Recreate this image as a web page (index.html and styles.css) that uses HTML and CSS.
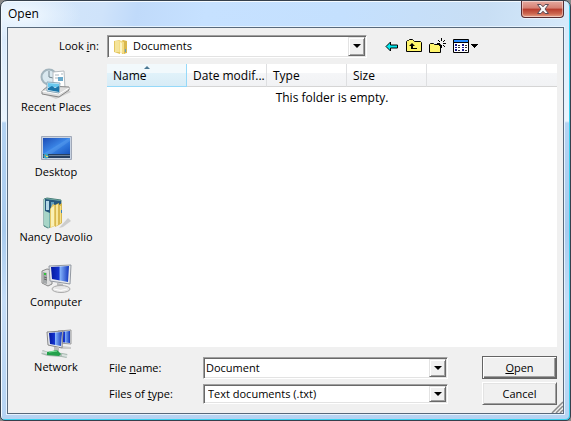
FILE: index.html
```html
<!DOCTYPE html>
<html lang="en">
<head>
<meta charset="utf-8">
<title>Open</title>
<link rel="stylesheet" href="styles.css">
</head>
<body>
<div class="window">
  <header class="titlebar">
    <h1 class="title">Open</h1>
    <button class="close" aria-label="Close">
      <svg width="14" height="12" viewBox="0 0 14 12"><path d="M1.5 1.5h3.4L7 3.8l2.1-2.3h3.4L9 6l3.5 4.5H9.1L7 8.2l-2.1 2.3H1.5L5 6z" fill="#f7f7f7" stroke="#5a4b56" stroke-width="1"/></svg>
    </button>
  </header>
  <form class="client">
    <label class="look-label" for="look">Look <u>i</u>n:</label>
    <div class="toolbar">
      <div class="combo look">
        <svg class="folder" width="16" height="18" viewBox="0 0 16 18">
          <path d="M1 3l6-1v14l-6-2z" fill="#e3c65f"/><path d="M2 3h5v11H2z" fill="#f5e49a"/>
          <path d="M7 4l3-2 4 1v12l-5 1z" fill="#dcb84c"/><path d="M6 2l5 2v12l-5-2z" fill="#f3dd86"/><path d="M7 4l2 1v10l-2-1z" fill="#fcf3c4"/><path d="M11 5l3-2v11l-3 2z" fill="#d9b84e"/><path d="M12 11h1v3h-1z" fill="#599fd0"/>
        </svg>
        <select id="look"><option>Documents</option></select>
        <span class="drop"></span>
      </div>
      <button type="button" class="tool" aria-label="Back">
        <svg width="14" height="11" viewBox="0 0 14 11"><path d="M1 5.5L5.5 1v3h7v3h-7v3z" fill="#00eaf0" stroke="#000"/></svg>
      </button>
      <button type="button" class="tool" aria-label="Up one level">
        <svg width="16" height="14" viewBox="0 0 16 14"><path d="M.5 12.500V2.500l1-1h1l1-1h3l1 1 1 1h6l1 1v9z" fill="#fff56c" stroke="#000"/><path d="M6 4L3 7h2v3h6V9H7V7h2z" fill="#000"/></svg>
      </button>
      <button type="button" class="tool" aria-label="New folder">
        <svg width="17" height="16" viewBox="0 0 17 16"><path d="M.5 14.500V6.500l1-1h3l1 1h6v8z" fill="#fff56c" stroke="#000"/><path d="M12 0h1v3h-1zM12 7h1v3h-1zM8 5h3v1H8zM14 5h3v1h-3zM9 2h1v1H9zM10 3h1v1h-1zM15 2h1v1h-1zM14 3h1v1h-1zM14 7h1v1h-1zM15 8h1v1h-1zM10 7h1v1h-1z" fill="#000"/></svg>
      </button>
      <button type="button" class="tool" aria-label="View menu">
        <svg width="25" height="14" viewBox="0 0 25 14"><path d="M.5.500h15v13H.5z" fill="#fff" stroke="#000"/><path d="M1 1h14v2H1z" fill="#258bff"/><path d="M0 3h16v1H0z" fill="#000"/><path d="M2 5h2v2H2zM2 8h2v1H2zM2 10h2v2H2zM9 5h2v2H9zM9 8h2v1H9zM9 10h2v2H9z" fill="#16168c"/><path d="M5 6h2v1H5zM5 8h2v1H5zM5 11h2v1H5zM12 6h2v1h-2zM12 8h2v1h-2zM12 11h2v1h-2z" fill="#333"/><path d="M18 5h7v1h-1v1h-1v1h-1v1h-1V8h-1V7h-1V6h-1z" fill="#000"/></svg>
      </button>
    </div>

    <nav class="places">
      <a href="#recent">
        <svg width="32" height="32" viewBox="0 0 32 32">
          <path d="M6 28l10 4 15-7-3-2z" fill="#bbb" opacity=".6"/>
          <circle cx="9" cy="10" r="7.500" fill="#d9e8ef" stroke="#a2b4bd" stroke-width="2"/><path d="M9 4v6l4 1" fill="none" stroke="#71838d"/>
          <path d="M13 5l11-1 1 17-12 1z" fill="#fff" stroke="#b5bbc0"/><path d="M15 8h4M15 11h3M21 7h2" stroke="#a7b4be"/><path d="M18 10h5v4h-5z" fill="#69a9cb"/>
          <path d="M2 24l6-5 21 1v3l-10 7-17-3z" fill="#dedede" stroke="#858585"/><path d="M2 24l17 3 10-6" fill="none" stroke="#fff"/>
          <path d="M7 15l13 1-1 10-12-2z" fill="#dff5ff" stroke="#8ba9ba"/><path d="M8 16l11 1v3H8z" fill="#69c8ee"/><path d="M8 21l4-2 3 2 4-2v6L8 23z" fill="#1c76aa"/>
        </svg>
        <span>Recent Places</span></a>
      <a href="#desktop">
        <svg width="32" height="32" viewBox="0 0 32 32">
          <defs><linearGradient id="desk" x2="1" y2="1"><stop stop-color="#1c4cb5"/><stop offset=".5" stop-color="#3b87e8"/><stop offset="1" stop-color="#1552be"/></linearGradient></defs>
          <path d="M1.500 4.500h30v23h-30z" fill="#c8d3e3" stroke="#a1a9b8"/><path d="M3 6h27v17H3z" fill="url(#desk)"/><path d="M3 22L29 6h1v3L10 23z" fill="#77b4f4" opacity=".25"/><path d="M3 22h27v4H3z" fill="#263f61"/><path d="M9 23h21v1H9z" fill="#6c829c"/><circle cx="6" cy="24" r="2.500" fill="#3ca7c1"/><path d="M5 23h1v1H5z" fill="#f17343"/><path d="M6 24h2v1H6z" fill="#f3df58"/>
        </svg>
        <span>Desktop</span></a>
      <a href="#user">
        <svg width="32" height="32" viewBox="0 0 32 32">
          <path d="M19 31l9-10 3 3-8 6z" fill="#aaa" opacity=".5"/>
          <path d="M4 2l3-1 14 2v21L8 31l-4-2z" fill="#79b5ae" stroke="#4e827d"/><path d="M4 2l5 2v27l-5-3z" fill="#a8d5c7"/><path d="M5 2l16 2v6L10 16 5 14z" fill="#27587d"/><path d="M6 4h3v9H6z" fill="#b4d7e6"/><path d="M11 5h3v5h-3z" fill="#639dbc"/>
          <path d="M10 12l3-5 2 1v21l-5 2z" fill="#e4c766"/><path d="M11 11l3-2v20l-3 1z" fill="#faf0b5"/><path d="M15 8l4-2v22l-4 2z" fill="#d9b74f"/><path d="M16 8l2-1v21l-2 1z" fill="#f7e69b"/><path d="M19 8l3-2v20l-3 2z" fill="#d8b84f"/><path d="M20 9h1v17h-1z" fill="#f5e08c"/><path d="M21 13h1v3h-1z" fill="#3880bb"/>
        </svg>
        <span>Nancy Davolio</span></a>
      <a href="#computer">
        <svg width="32" height="32" viewBox="0 0 32 32">
          <defs><linearGradient id="scr" x2="1"><stop stop-color="#0419a0"/><stop offset=".45" stop-color="#1434d0"/><stop offset=".5" stop-color="#84b3fa"/><stop offset="1" stop-color="#1236bd"/></linearGradient></defs>
          <path d="M2 9l5-2 5 1v14l-4 2-6-3z" fill="#ddd" stroke="#888"/><path d="M3 10l4 1v11l-4-1z" fill="#a3a7a8"/><path d="M4 11h2v2H4z" fill="#31c239"/><path d="M4 15l3 1M4 17l3 1" stroke="#666"/>
          <path d="M17 21l6 1v4h-6z" fill="#bbb"/><ellipse cx="21" cy="27" rx="9" ry="3.500" fill="#e7e7e7" stroke="#aaa"/><path d="M14 27q7 3 13 0" fill="none" stroke="#fff"/>
          <path d="M9 4l22-1-1 19-20-3z" fill="#e7e9ed" stroke="#9298a1"/><path d="M11 5l18-1-1 16-16-3z" fill="url(#scr)"/>
        </svg>
        <span>Computer</span></a>
      <a href="#network">
        <svg width="32" height="32" viewBox="0 0 32 32">
          <path d="M18 4l13-1v14l-12-1z" fill="#dadee5" stroke="#999"/><path d="M20 5l10-1v12l-10-1z" fill="url(#scr)"/><path d="M22 19l9 1v2h-9z" fill="#ccc"/>
          <path d="M7 5l16-1-1 17-14-3z" fill="#e5e8ed" stroke="#888"/><path d="M9 6l13-1-1 14-11-2z" fill="url(#scr)"/><path d="M14 20h5v5h-5z" fill="#bbb"/>
          <path d="M2 25l6 2 14 1 5 1" fill="none" stroke="#a8b8b0" stroke-width="4"/><path d="M2 25l5 1M22 28l5 1" stroke="#d9e2df" stroke-width="2"/><path d="M7 25l10-2 4 4-2 2-12-1z" fill="#23a14b"/><path d="M9 25l8-1" stroke="#7ee29c" stroke-width="1"/>
        </svg>
        <span>Network</span></a>
    </nav>

    <div class="list">
      <table>
        <thead><tr><th class="sorted">Name</th><th>Date modif...</th><th>Type</th><th>Size</th><th class="rest"></th></tr></thead>
        <tbody><tr><td colspan="5">This folder is empty.</td></tr></tbody>
      </table>
    </div>

    <div class="fields">
      <label for="name">File <u>n</u>ame:</label>
      <div class="combo name"><input id="name" type="text" value="Document"><button type="button" class="drop" aria-label="Recent names"></button></div>
      <button type="submit" class="push default"><span><u>O</u>pen</span></button>
      <label for="type">Files of <u>t</u>ype:</label>
      <div class="combo type"><select id="type"><option>Text documents (.txt)</option></select><span class="drop"></span></div>
      <button type="button" class="push"><span>Cancel</span></button>
    </div>
    <svg class="grip" width="12" height="12" viewBox="0 0 12 12"><path d="M1 12L12 1M5 12l7-7M9 12l3-3" stroke="#8c8c8c" stroke-width="1.500"/></svg>
  </form>
</div>
</body>
</html>
```
FILE: styles.css
```css
* { box-sizing: border-box; }
body {
  margin: 0;
  background: #8a8a8a;
  color: #000;
  font: 11px/16px "Open Sans", "Noto Sans", sans-serif;
}
button, input, select { font: inherit; color: inherit; }
.window {
  display: flex;
  flex-direction: column;
  min-height: 100vh;
  padding: 0 6px 6px;
  border: 1px solid #35404c;
  border-radius: 7px 7px 5px 5px;
  background:
    radial-gradient(ellipse 60px 26px at 20px 14px, #f2f9ff, #f2f9ff00),
    linear-gradient(100deg, #d5e8fb 0, #cfe3fa 18%, #c0dafa 24%, #c6e1ff 36%, #c4e0fe 60%, #c8def4 85%, #d6eafb 100%) top / 100% 28px no-repeat,
    linear-gradient(#d3e6fa, #eaf4fd 120px, #b4d3f2 122px, #a9cbee 230px, #c5ddf7 300px, #b5d3f2);
  box-shadow: inset 1px 1px #f4faff, inset -1px -1px #38d0ee;
}
.titlebar {
  display: flex;
  justify-content: space-between;
  height: 26px;
}
.title {
  margin: 0;
  padding: 5px 1px;
  font-size: 12px;
  font-weight: 400;
}
.close {
  display: grid;
  place-items: center;
  width: 43px;
  height: 17px;
  padding: 0;
  border: 1px solid #572c31;
  border-top: 0;
  border-radius: 0 0 4px 4px;
  background: linear-gradient(#e5aaa0, #d57f72 45%, #b73b2c 50%, #cc6850 80%, #e9a38b);
  box-shadow: inset 0 0 0 1px #ffffff70, 0 1px #ffffff90;
}
.client {
  position: relative;
  flex: 1;
  display: grid;
  grid-template-columns: 99px 1fr;
  grid-template-rows: 36px 1fr 66px;
  padding-right: 6px;
  border: 1px solid #58697b;
  background: #f0f0f0;
  box-shadow: 0 0 0 1px #e6f3ff;
}
.look-label {
  justify-self: end;
  padding: 10px 8px 0 0;
}
.toolbar {
  display: flex;
  align-items: center;
}
.combo {
  position: relative;
  display: flex;
  border: 1px solid;
  border-color: #a0a0a0 #fff #fff #a0a0a0;
  background: #fff;
  box-shadow: inset 1px 1px #696969, inset -1px -1px #e3e3e3;
}
.combo select, .combo input {
  appearance: none;
  flex: 1;
  min-width: 0;
  padding: 0 18px 0 2px;
  border: 0;
  outline: 0;
  background: transparent;
}
.combo select { padding-left: 4px; }
.drop {
  position: absolute;
  top: 1px;
  right: 1px;
  bottom: 1px;
  display: grid;
  place-items: center;
  width: 17px;
  padding: 0;
  border: 1px solid;
  border-color: #e3e3e3 #696969 #696969 #e3e3e3;
  background: #f0f0f0;
  box-shadow: inset 1px 1px #fff, inset -1px -1px #a0a0a0;
  pointer-events: none;
}
button.drop { pointer-events: auto; }
.drop::before {
  content: "";
  border: 4px solid transparent;
  border-top-color: #000;
  border-bottom: 0;
}
.look {
  flex: 0 1 260px;
  height: 23px;
  margin-right: 18px;
}
.look .folder {
  position: absolute;
  left: 5px;
  top: 2px;
}
.combo.look select { padding-left: 25px; }
.tool {
  display: flex;
  margin-right: 7px;
  padding: 0;
  border: 0;
  background: none;
}
.places {
  grid-row: 2 / 4;
  display: flex;
  flex-direction: column;
  gap: 17px;
  padding: 3px 3px 0 0;
}
.places a {
  display: flex;
  flex-direction: column;
  align-items: center;
  color: inherit;
  text-decoration: none;
  white-space: nowrap;
}
.list {
  background: #fff;
  font-size: 12px;
}
table {
  width: 100%;
  table-layout: fixed;
  border-collapse: separate;
  border-spacing: 0;
}
th {
  width: 80px;
  height: 23px;
  padding: 2px 0 0 6px;
  border-right: 1px solid #dedfe1;
  border-bottom: 1px solid #d5d5d5;
  background: linear-gradient(#fff 40%, #f5f6f8 40%, #f1f2f4);
  font-weight: 400;
  text-align: left;
  white-space: nowrap;
}
th.rest { width: auto; border-right: 0; }
th.sorted {
  position: relative;
  border-color: #96d9f9;
  background: linear-gradient(#f2f9fc 40%, #e1f2fa 40%, #d8ecf6);
}
th.sorted::before {
  content: "";
  position: absolute;
  top: 2px;
  left: 37px;
  border: 3px solid transparent;
  border-bottom-color: #4b7893;
  border-top: 0;
}
td {
  padding: 3px 0;
  text-align: center;
}
.fields {
  display: grid;
  grid-template-columns: 94px 1fr 75px;
  grid-template-rows: 23px 23px;
  row-gap: 3px;
  align-items: center;
  padding: 9px 0 0 2px;
}
.fields .combo { margin-right: 34px; }
.name { height: 22px; }
.type { height: 20px; }
.push {
  align-self: stretch;
  padding: 0;
  border: 1px solid;
  border-color: #fff #696969 #696969 #fff;
  background: #f0f0f0;
  box-shadow: inset 1px 1px #e3e3e3, inset -1px -1px #a0a0a0;
}
.push.default {
  border-color: #646464;
  box-shadow: inset 1px 1px #fff, inset -1px -1px #696969, inset -2px -2px #a0a0a0;
}
.grip {
  position: absolute;
  right: 0;
  bottom: 0;
}
```
